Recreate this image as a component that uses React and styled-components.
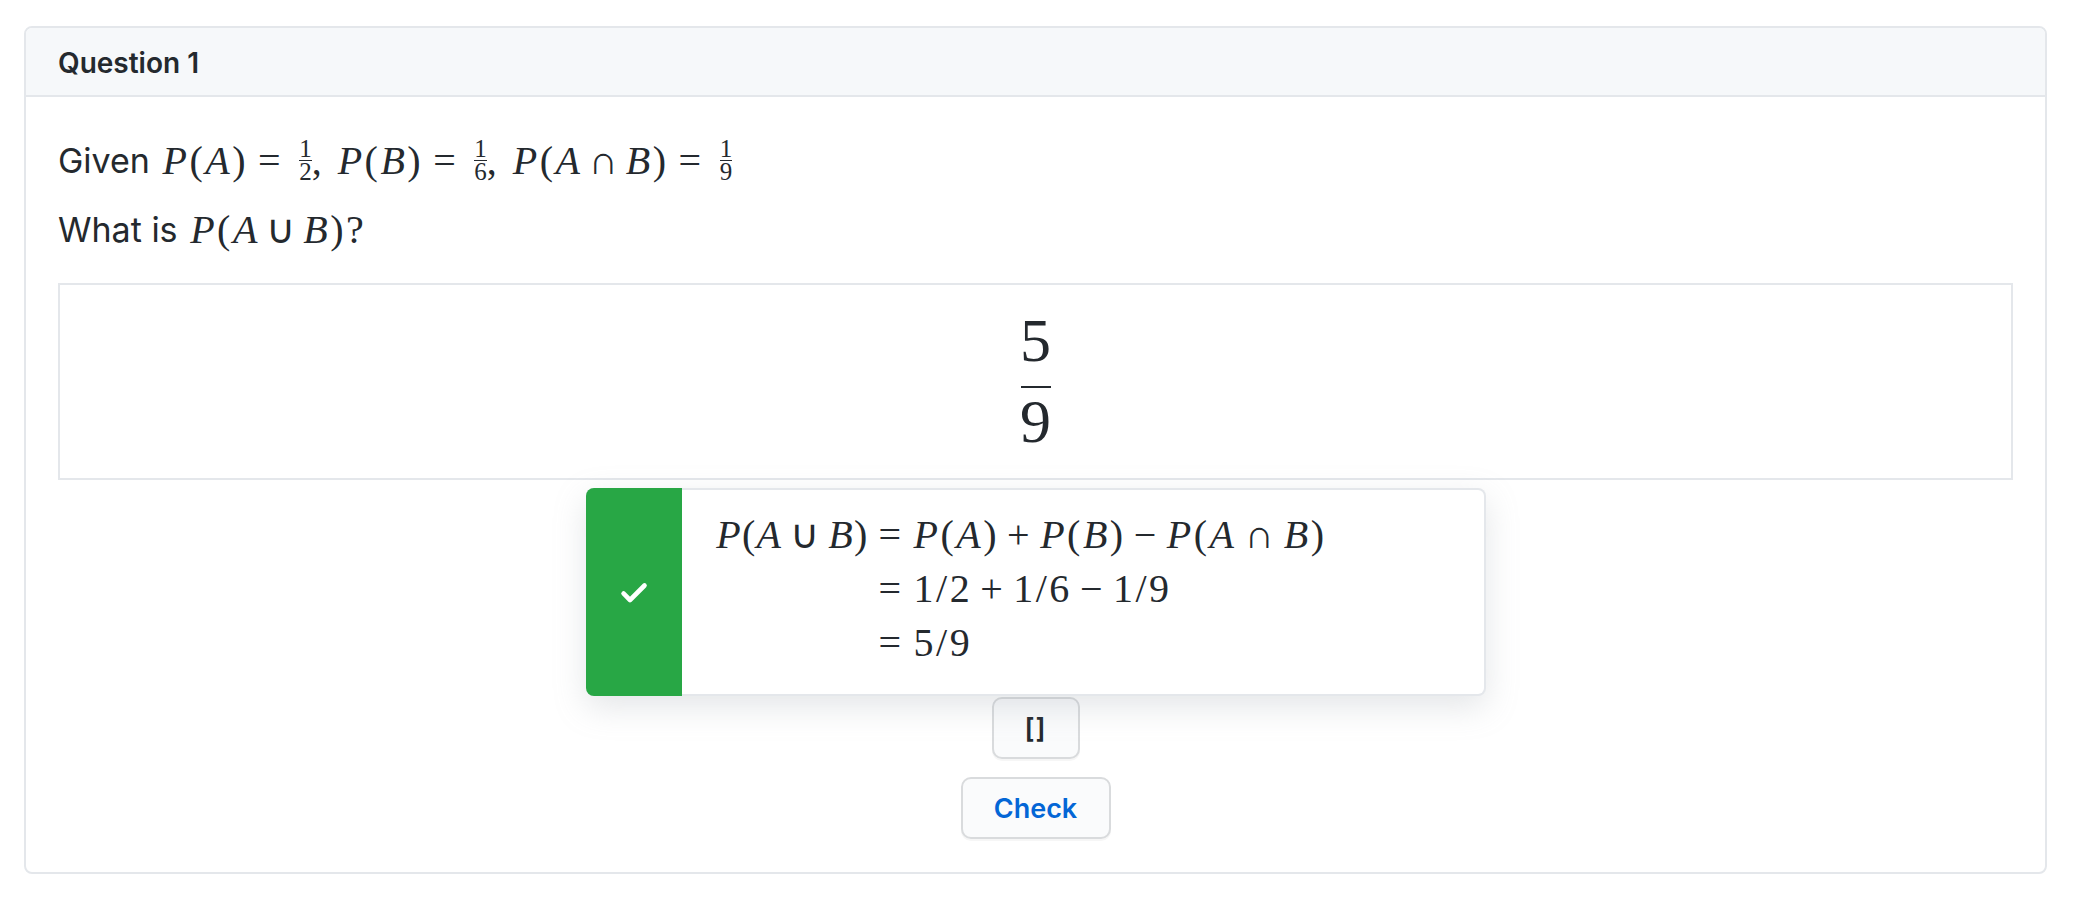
import styled, { createGlobalStyle } from "styled-components";

const GlobalStyle = createGlobalStyle`
    html, body {
        margin: 0;
        padding: 0;
        background: #ffffff;
    }
    body {
        font-family: Inter, "Liberation Sans", sans-serif;
        color: #24292e;
    }
`;

function Frac({ top, bottom }) {
    return (
        <SmallFrac>
            <span>{top}</span>
            <span>{bottom}</span>
        </SmallFrac>
    );
}

export default function App() {
    return (
        <Page>
            <GlobalStyle />
            <Card>
                <Header>Question 1</Header>
                <Body>
                    <Line>
                        Given&nbsp;
                        <Math>
                            <i>P</i>(<i>A</i>)<Rel>=</Rel><Frac top="1" bottom="2" /><Comma>,</Comma>
                            <i>P</i>(<i>B</i>)<Rel>=</Rel><Frac top="1" bottom="6" /><Comma>,</Comma>
                            <i>P</i>(<i>A</i><Bin $tight>∩</Bin><i>B</i>)<Rel>=</Rel><Frac top="1" bottom="9" />
                        </Math>
                    </Line>
                    <Line>
                        What is&nbsp;
                        <Math>
                            <i>P</i>(<i>A</i><Bin $tight>∪</Bin><i>B</i>)?
                        </Math>
                    </Line>

                    <AnswerBox>
                        <BigFrac>
                            <span>5</span>
                            <span>9</span>
                        </BigFrac>
                    </AnswerBox>

                    <Flash>
                        <FlashIcon>
                            <svg width="32" height="32" viewBox="0 0 16 16" fill="#ffffff" stroke="#ffffff" strokeWidth="0.8">
                                <path d="M13.78 4.22a.75.75 0 010 1.06l-7.25 7.25a.75.75 0 01-1.06 0L2.22 9.28a.75.75 0 011.06-1.06L6 10.94l6.72-6.72a.75.75 0 011.06 0z" />
                            </svg>
                        </FlashIcon>
                        <Solution>
                            <Lhs><i>P</i>(<i>A</i><Bin>∪</Bin><i>B</i>)</Lhs>
                            <Rhs>
                                <Rel $first>=</Rel><i>P</i>(<i>A</i>)<Bin>+</Bin><i>P</i>(<i>B</i>)<Bin>−</Bin><i>P</i>(<i>A</i><Bin>∩</Bin><i>B</i>)
                            </Rhs>
                            <Lhs />
                            <Rhs>
                                <Rel $first>=</Rel>1/2<Bin>+</Bin>1/6<Bin>−</Bin>1/9
                            </Rhs>
                            <Lhs />
                            <Rhs>
                                <Rel $first>=</Rel>5/9
                            </Rhs>
                        </Solution>
                    </Flash>

                    <Actions>
                        <SmallButton>[]</SmallButton>
                        <CheckButton>Check</CheckButton>
                    </Actions>
                </Body>
            </Card>
        </Page>
    );
}

const Page = styled.div`
    padding: 26px 35px 29px 24px;
`;

const Card = styled.section`
    border: 2px solid #e4e7eb;
    border-radius: 8px;
    background: #ffffff;
`;

const Header = styled.header`
    height: 69px;
    box-sizing: border-box;
    display: flex;
    align-items: center;
    padding: 2px 32px 0;
    background: #f6f8fa;
    border-bottom: 2px solid #e4e7eb;
    border-radius: 6px 6px 0 0;
    font-size: 28px;
    font-weight: 600;
`;

const Body = styled.div`
    padding: 39px 32px 33px;
`;

const Line = styled.div`
    display: flex;
    align-items: center;
    height: 48px;
    margin-bottom: 21px;
    font-size: 34px;
    white-space: pre;

    &:nth-of-type(2) {
        margin-bottom: 30px;
    }
`;

const Math = styled.span`
    display: inline-flex;
    align-items: center;
    margin-left: 3px;
    font-family: "Liberation Serif", serif;
    font-size: 40px;
    letter-spacing: 2.5px;
    white-space: pre;
`;

const Rel = styled.span`
    margin: 0 ${(p) => (p.$first ? "10px 0 0" : "16px 0 10px")};
`;

const Bin = styled.span`
    margin: 0 ${(p) => (p.$tight ? "6px" : "8px")};
`;

const Comma = styled.span`
    margin-right: 13.5px;
`;

const SmallFrac = styled.span`
    display: inline-flex;
    flex-direction: column;
    align-items: stretch;
    font-size: 25px;
    letter-spacing: 0;
    line-height: 22px;
    text-align: center;

    span:first-child {
        border-bottom: 1px solid #24292e;
    }
`;

const AnswerBox = styled.div`
    height: 193px;
    display: flex;
    align-items: center;
    justify-content: center;
    border: 2px solid #e4e7eb;
`;

const BigFrac = styled.div`
    display: flex;
    flex-direction: column;
    align-items: center;
    width: 30px;
    padding-bottom: 15px;
    font-family: "Liberation Serif", serif;
    font-size: 62px;

    span {
        width: 100%;
        display: flex;
        justify-content: center;
        line-height: 66px;
    }

    span:first-child {
        line-height: 92px;
        border-bottom: 2px solid #24292e;
    }
`;

const Flash = styled.div`
    width: 900px;
    height: 208px;
    box-sizing: border-box;
    margin: 8px auto 0;
    display: flex;
    background: #ffffff;
    border: 2px solid #e4e7eb;
    border-left: none;
    border-radius: 8px;
    box-shadow: 0 11px 32px rgba(149, 157, 165, 0.25);
    position: relative;
`;

const FlashIcon = styled.div`
    width: 96px;
    margin: -2px 0;
    display: flex;
    align-items: center;
    justify-content: center;
    background: #28a745;
    border-radius: 8px 0 0 8px;
`;

const Solution = styled.div`
    padding: 17px 0 0 36px;
    display: grid;
    grid-template-columns: 161px auto;
    grid-auto-rows: 54px;
    align-items: center;
    justify-content: start;
    font-family: "Liberation Serif", serif;
    font-size: 40px;
    white-space: pre;
`;

const Lhs = styled.div`
    display: flex;
    justify-content: flex-end;
    padding-right: 10px;
    letter-spacing: 1.2px;
`;

const Rhs = styled.div`
    display: flex;
    letter-spacing: 2.5px;
`;

const Actions = styled.div`
    display: flex;
    flex-direction: column;
    align-items: center;
    gap: 18px;
    margin-top: 1px;
`;

const BaseButton = styled.button`
    height: 62px;
    box-sizing: border-box;
    background: #fafbfc;
    border: 2px solid #d9dbdd;
    border-radius: 10px;
    box-shadow: 0 2px 0 rgba(27, 31, 35, 0.04);
    font-family: Inter, "Liberation Sans", sans-serif;
    font-size: 27px;
    font-weight: 600;
    padding: 0;
`;

const SmallButton = styled(BaseButton)`
    width: 88px;
    color: #24292e;
    letter-spacing: 1px;
`;

const CheckButton = styled(BaseButton)`
    width: 150px;
    color: #0366d6;
`;
